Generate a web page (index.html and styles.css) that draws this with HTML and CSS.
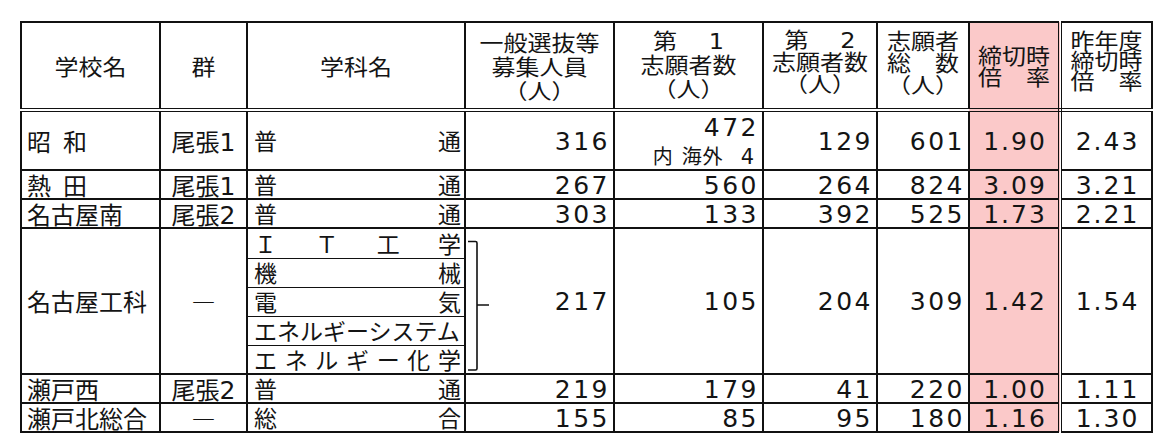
FILE: index.html
```html
<!DOCTYPE html>
<html lang="ja">
<head>
<meta charset="utf-8">
<title>志願者数</title>
<link rel="stylesheet" href="styles.css">
</head>
<body>
<table class="exam">
  <colgroup>
    <col class="w-school"><col class="w-group"><col class="w-dept"><col class="w-recruit"><col class="w-first"><col class="w-second"><col class="w-total"><col class="w-rate"><col class="w-prev">
  </colgroup>
  <thead>
    <tr class="h-head">
      <th><span class="hd">学校名</span></th>
      <th><span class="hd">群</span></th>
      <th><span class="hd">学科名</span></th>
      <th class="lh27"><span class="hd">一般選抜等<br>募集人員<br>（人）</span></th>
      <th class="lh27 up2"><span class="hd">第　<span class="n">&nbsp;1</span><br>志願者数<br>（人）</span></th>
      <th class="lh25 up5"><span class="hd">第　<span class="n">&nbsp;2</span><br>志願者数<br>（人）</span></th>
      <th class="lh25 up4"><span class="hd">志願者<br>総　数<br>（人）</span></th>
      <th class="rate lh24"><span class="hd">締切時<br>倍　率</span></th>
      <th class="prev lh23 up6"><span class="hd">昨年度<br>締切時<br>倍　率</span></th>
    </tr>
  </thead>
  <tbody>
    <tr class="h-r1">
      <td class="school">昭&ensp;和</td>
      <td class="group">尾張<span class="n">1</span></td>
      <td class="dept"><div class="dist"><span>普</span><span>通</span></div></td>
      <td class="num"><span class="n">316</span></td>
      <td class="num"><div class="n l1">472</div><div class="l2"><span>内</span><span class="s1">海外</span><span class="n s2">4</span></div></td>
      <td class="num"><span class="n">129</span></td>
      <td class="num"><span class="n">601</span></td>
      <td class="rate"><span class="n">1.90</span></td>
      <td class="prev"><span class="n">2.43</span></td>
    </tr>
    <tr class="h-std">
      <td class="school">熱&ensp;田</td>
      <td class="group">尾張<span class="n">1</span></td>
      <td class="dept"><div class="dist"><span>普</span><span>通</span></div></td>
      <td class="num"><span class="n">267</span></td>
      <td class="num"><span class="n">560</span></td>
      <td class="num"><span class="n">264</span></td>
      <td class="num"><span class="n">824</span></td>
      <td class="rate"><span class="n">3.09</span></td>
      <td class="prev"><span class="n">3.21</span></td>
    </tr>
    <tr class="h-std">
      <td class="school">名古屋南</td>
      <td class="group">尾張<span class="n">2</span></td>
      <td class="dept"><div class="dist"><span>普</span><span>通</span></div></td>
      <td class="num"><span class="n">303</span></td>
      <td class="num"><span class="n">133</span></td>
      <td class="num"><span class="n">392</span></td>
      <td class="num"><span class="n">525</span></td>
      <td class="rate"><span class="n">1.73</span></td>
      <td class="prev"><span class="n">2.21</span></td>
    </tr>
    <tr class="h-sub1">
      <td class="school" rowspan="5">名古屋工科</td>
      <td class="group" rowspan="5">―</td>
      <td class="dept d-top"><div class="dist"><span>Ｉ</span><span>Ｔ</span><span>工</span><span>学</span></div></td>
      <td class="num bracketed" rowspan="5">
        <svg class="bracket" width="30" height="146" viewBox="0 0 30 146" aria-hidden="true">
          <path d="M2 12.5 H9.5 Q11 12.5 11 14 V139.5 Q11 141 9.5 141 H2 M11 76 H23" fill="none" stroke="#111" stroke-width="1.6"/>
        </svg>
        <span class="n">217</span>
      </td>
      <td class="num" rowspan="5"><span class="n">105</span></td>
      <td class="num" rowspan="5"><span class="n">204</span></td>
      <td class="num" rowspan="5"><span class="n">309</span></td>
      <td class="rate" rowspan="5"><span class="n">1.42</span></td>
      <td class="prev" rowspan="5"><span class="n">1.54</span></td>
    </tr>
    <tr class="h-std">
      <td class="dept d-mid"><div class="dist"><span>機</span><span>械</span></div></td>
    </tr>
    <tr class="h-std">
      <td class="dept d-mid"><div class="dist"><span>電</span><span>気</span></div></td>
    </tr>
    <tr class="h-std">
      <td class="dept d-mid"><div class="dist"><span>エネルギーシステム</span></div></td>
    </tr>
    <tr class="h-std">
      <td class="dept d-bot"><div class="dist"><span>エ</span><span>ネ</span><span>ル</span><span>ギ</span><span>ー</span><span>化</span><span>学</span></div></td>
    </tr>
    <tr class="h-std">
      <td class="school">瀬戸西</td>
      <td class="group">尾張<span class="n">2</span></td>
      <td class="dept"><div class="dist"><span>普</span><span>通</span></div></td>
      <td class="num"><span class="n">219</span></td>
      <td class="num"><span class="n">179</span></td>
      <td class="num"><span class="n">41</span></td>
      <td class="num"><span class="n">220</span></td>
      <td class="rate"><span class="n">1.00</span></td>
      <td class="prev"><span class="n">1.11</span></td>
    </tr>
    <tr class="h-std">
      <td class="school">瀬戸北総合</td>
      <td class="group">―</td>
      <td class="dept"><div class="dist"><span>総</span><span>合</span></div></td>
      <td class="num"><span class="n">155</span></td>
      <td class="num"><span class="n">85</span></td>
      <td class="num"><span class="n">95</span></td>
      <td class="num"><span class="n">180</span></td>
      <td class="rate"><span class="n">1.16</span></td>
      <td class="prev"><span class="n">1.30</span></td>
    </tr>
  </tbody>
</table>
</body>
</html>
```

FILE: styles.css
```css
html, body {
  margin: 0;
  padding: 0;
  background: #ffffff;
}

body {
  color: #141414;
  font-family: "Noto Sans CJK JP", "Noto Sans CJK SC", sans-serif;
}

.exam {
  border-collapse: collapse;
  table-layout: fixed;
  width: 1133px;
  margin: 21px 0 0 20px;
}

.w-school { width: 139px; }
.w-group { width: 87px; }
.w-dept { width: 218px; }
.w-recruit { width: 149px; }
.w-first { width: 149px; }
.w-second { width: 114px; }
.w-total { width: 92px; }
.w-rate { width: 91px; }
.w-prev { width: 92px; }

.exam th,
.exam td {
  border: 2px solid #111;
  padding: 0;
  box-sizing: border-box;
  font-size: 24px;
  line-height: 24px;
  font-weight: normal;
  white-space: nowrap;
  vertical-align: middle;
}

.exam th {
  text-align: center;
  border-bottom: 4px double #111;
}

.hd {
  display: inline-block;
  transform: scaleY(0.88);
}

.exam th.lh27 { line-height: 27px; }
.exam th.lh25 { line-height: 25px; }
.exam th.lh24 { line-height: 24px; }
.exam th.lh23 { line-height: 23px; }

.exam th.up2 { padding-bottom: 4px; }
.exam th.up4 { padding-bottom: 8px; }
.exam th.up5 { padding-bottom: 10px; }
.exam th.up6 { padding-bottom: 12px; }

.h-head th { height: 88px; }
.h-r1 td { height: 59px; }
.h-std td { height: 29px; }
.h-sub1 td { height: 30px; }

.n {
  font-family: "DejaVu Sans", sans-serif;
  font-size: 25px;
  letter-spacing: 2.5px;
}

th .n {
  letter-spacing: 0;
  font-size: 24px;
  line-height: 1px;
}

.group .n,
.l2 .n {
  line-height: 1px;
}

.school {
  text-align: left;
  padding-left: 5px !important;
}

.group {
  text-align: center;
}

.group .n {
  letter-spacing: 0;
}

.dept {
  font-size: 23px !important;
}

.dist {
  display: flex;
  justify-content: space-between;
  padding: 0 3px 0 6px;
  line-height: 23px;
}

.d-top { border-bottom-width: 1px !important; }
.d-mid { border-top-width: 1px !important; border-bottom-width: 1px !important; }
.d-bot { border-top-width: 1px !important; }

.num {
  text-align: right;
  padding-right: 3px !important;
}

.l1 {
  line-height: 31px;
}

.l2 {
  font-size: 20px;
  line-height: 26px;
  padding-right: 5px;
}

.l2 .s1 {
  margin-left: 9px;
  letter-spacing: 1px;
}

.l2 .n {
  font-size: 21px;
  letter-spacing: 0;
  margin-left: 17px;
}

.rate,
.prev {
  text-align: center;
}

.rate {
  background: #fbc9c9;
  border-right: 4px double #111 !important;
}

.rate .n,
.prev .n {
  letter-spacing: 2px;
  margin-right: -2px;
}

.bracketed {
  position: relative;
}

.bracket {
  position: absolute;
  left: 0;
  top: 0;
}
```
